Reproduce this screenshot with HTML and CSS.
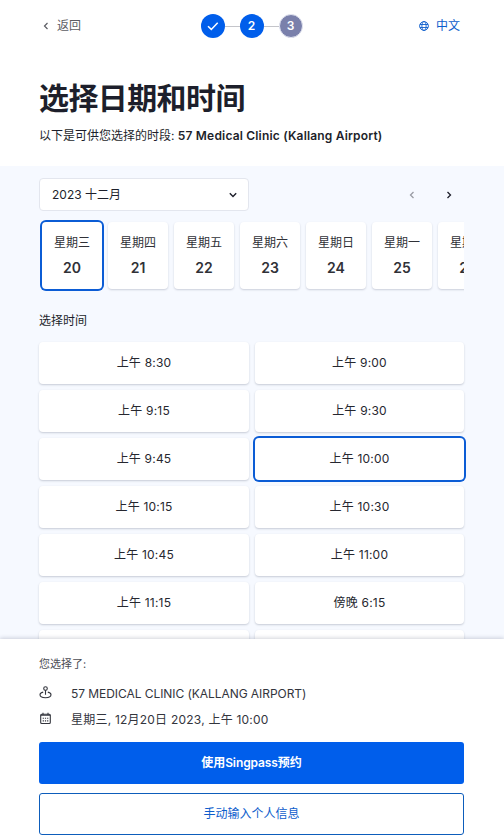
FILE: index.html
```html
<!DOCTYPE html>
<html lang="zh-CN">
<head>
<meta charset="utf-8">
<title>选择日期和时间</title>
<link rel="stylesheet" href="styles.css">
</head>
<body>
<div class="page">
  <header class="top">
    <a class="back"><svg width="6" height="8" viewBox="0 0 6 8"><path d="M4.5 1 1.5 4l3 3"/></svg><span>返回</span></a>
    <div class="steps">
      <span class="step"><svg width="12" height="10" viewBox="0 0 12 10"><path d="M1 5.2 4.3 8.4 10.7 1.7"/></svg></span>
      <i class="line"></i>
      <span class="step">2</span>
      <i class="line"></i>
      <span class="step todo">3</span>
    </div>
    <a class="lang"><svg width="10" height="10" viewBox="0 0 10 10"><circle cx="5" cy="5" r="4.4"/><ellipse cx="5" cy="5" rx="2.1" ry="4.4"/><path d="M1 3.500h8M1 6.500h8"/></svg><span>中文</span></a>
  </header>
  <section class="intro">
    <h1>选择日期和时间</h1>
    <p>以下是可供您选择的时段: <b>57 Medical Clinic (Kallang Airport)</b></p>
  </section>
  <main class="picker">
    <div class="month-row">
      <div class="select"><span>2023 十二月</span><svg width="8" height="6" viewBox="0 0 8 6"><path d="M.8 1.2 4 4.500l3.200-3.300"/></svg></div>
      <div class="arrows">
        <svg class="off" width="6" height="8" viewBox="0 0 6 8"><path d="M4.500 1 1.500 4l3 3"/></svg>
        <svg width="6" height="8" viewBox="0 0 6 8"><path d="m1.500 1 3 3-3 3"/></svg>
      </div>
    </div>
    <div class="days">
      <div class="day selected"><span>星期三</span><b>20</b></div>
      <div class="day"><span>星期四</span><b>21</b></div>
      <div class="day"><span>星期五</span><b>22</b></div>
      <div class="day"><span>星期六</span><b>23</b></div>
      <div class="day"><span>星期日</span><b>24</b></div>
      <div class="day"><span>星期一</span><b>25</b></div>
      <div class="day"><span>星期二</span><b>26</b></div>
    </div>
    <h2>选择时间</h2>
    <div class="slots">
      <div class="slot">上午 8:30</div><div class="slot">上午 9:00</div>
      <div class="slot">上午 9:15</div><div class="slot">上午 9:30</div>
      <div class="slot">上午 9:45</div><div class="slot selected">上午 10:00</div>
      <div class="slot">上午 10:15</div><div class="slot">上午 10:30</div>
      <div class="slot">上午 10:45</div><div class="slot">上午 11:00</div>
      <div class="slot">上午 11:15</div><div class="slot">傍晚 6:15</div>
      <div class="slot"></div><div class="slot"></div>
    </div>
  </main>
  <footer class="summary">
    <p class="label">您选择了:</p>
    <div class="info"><svg width="13" height="13" viewBox="0 0 13 13"><circle cx="6.5" cy="2.600" r="1.800"/><path d="M6.500 4.400v4.400M4.200 6.100C2.400 6.500 1 7.500 1 8.800c0 1.700 2.300 2.900 5.500 2.900S12 10.500 12 8.800c0-1.300-1.400-2.300-3.200-2.700"/></svg><span class="place">57 MEDICAL CLINIC (KALLANG AIRPORT)</span></div>
    <div class="info"><svg width="13" height="13" viewBox="0 0 13 13"><rect x="1.700" y="2.200" width="9.600" height="9.300" rx="1"/><path d="M1.700 3.200h9.600M4 .8v2M9 .8v2"/><path class="dots" d="M3.700 6.300h5.600M3.700 8.900h5.600"/></svg><span class="when">星期三, 12月20日 2023, 上午 10:00</span></div>
    <button class="primary">使用Singpass预约</button>
    <button class="secondary">手动输入个人信息</button>
  </footer>
</div>
</body>
</html>
```
FILE: styles.css
```css
* { box-sizing: border-box; }
body, h1, h2, p { margin: 0; }
body {
  font: 12px/18px Inter, "Noto Sans CJK SC", sans-serif;
  color: #1d1f2b;
  overflow: hidden;
}
svg { fill: none; stroke: currentColor; stroke-width: 1.2; display: block; flex: none; }
.page { height: 840px; display: flex; flex-direction: column; background: #fff; }

.top {
  height: 52px;
  flex: none;
  padding: 0 44px 0 43px;
  display: grid;
  grid-template-columns: 1fr auto 1fr;
  align-items: center;
}
.back, .lang { display: flex; align-items: center; }
.back { gap: 8px; color: #5c5d63; }
.lang { gap: 7px; color: #0d5dcc; justify-content: flex-end; }
.lang svg { stroke-width: .9; }
.steps { display: flex; align-items: center; }
.step {
  width: 24px;
  height: 24px;
  border-radius: 50%;
  background: #005eeb;
  color: #fff;
  font-weight: 600;
  font-size: 12px;
  display: flex;
  align-items: center;
  justify-content: center;
}
.step svg { stroke-width: 1.5; }
.todo { background: #7a80ab; border: 1px solid #e3e5f1; }
.line { width: 15px; height: 1px; background: #c4c5ca; }

.intro { height: 114px; flex: none; padding: 24px 39px 0; }
h1 { font-size: 30px; line-height: 44px; font-weight: 700; letter-spacing: -.6px; }
.intro p { margin-top: 7px; }
.intro b { font-weight: 600; letter-spacing: .18px; }

.picker { flex: 1; min-height: 0; overflow: hidden; background: #f6f9ff; padding: 12px 40px 0 39px; }
.month-row { display: flex; justify-content: space-between; align-items: center; }
.select {
  width: 210px;
  height: 33px;
  padding: 0 11px 0 12px;
  display: flex;
  align-items: center;
  justify-content: space-between;
  background: #fff;
  border: 1px solid #e3e6ee;
  border-radius: 4px;
}
.select svg { stroke-width: 1.4; }
.arrows { display: flex; gap: 31px; padding-right: 12px; }
.arrows svg { stroke-width: 1.3; }
.arrows .off { color: #9a9ca4; }

.days { display: flex; gap: 6px; overflow: hidden; padding: 11px 0 6px 3px; }
.day {
  flex: 0 0 60px;
  height: 67px;
  margin-bottom: 1px;
  padding-top: 12px;
  display: flex;
  flex-direction: column;
  align-items: center;
  background: #fff;
  border-radius: 4px;
  box-shadow: 0 1px 2px rgba(30, 40, 70, .2);
  color: #303137;
}
.day b { margin-top: 7px; font-size: 14px; font-weight: 600; }
.day.selected, .slot.selected { box-shadow: 0 0 0 2px #0b5cd5; }

h2 { font-size: 12px; font-weight: 400; margin-top: 16px; }
.slots { margin-top: 12px; display: grid; grid-template-columns: 210px 209px; gap: 6px; }
.slot {
  height: 42px;
  display: flex;
  align-items: center;
  justify-content: center;
  background: #fff;
  border-radius: 4px;
  box-shadow: 0 1px 2px rgba(30, 40, 70, .22);
  letter-spacing: .2px;
  color: #26272f;
}

.summary {
  height: 201px;
  flex: none;
  position: relative;
  padding: 17px 40px 0 39px;
  background: #fff;
  box-shadow: 0 -1px 4px rgba(30, 40, 70, .2);
}
.label { font-size: 11px; line-height: 16px; color: #4c4d55; }
.info { display: flex; align-items: center; gap: 19px; height: 26px; color: #33353d; }
.info svg { stroke-width: 1.1; margin-top: -3px; }
.place { letter-spacing: -.06px; }
.when { letter-spacing: .22px; }
.label + .info { margin-top: 9px; }
.dots { stroke-dasharray: 1.2 1; }
button {
  display: block;
  width: 100%;
  height: 42px;
  padding: 0;
  border-radius: 3px;
  font: inherit;
}
.primary { margin-top: 9px; border: 0; background: #005eeb; color: #fff; font-weight: 600; letter-spacing: -.1px; }
.secondary { margin-top: 9px; background: #fff; border: 1px solid #0d5dbb; color: #0d5dcc; }
```
